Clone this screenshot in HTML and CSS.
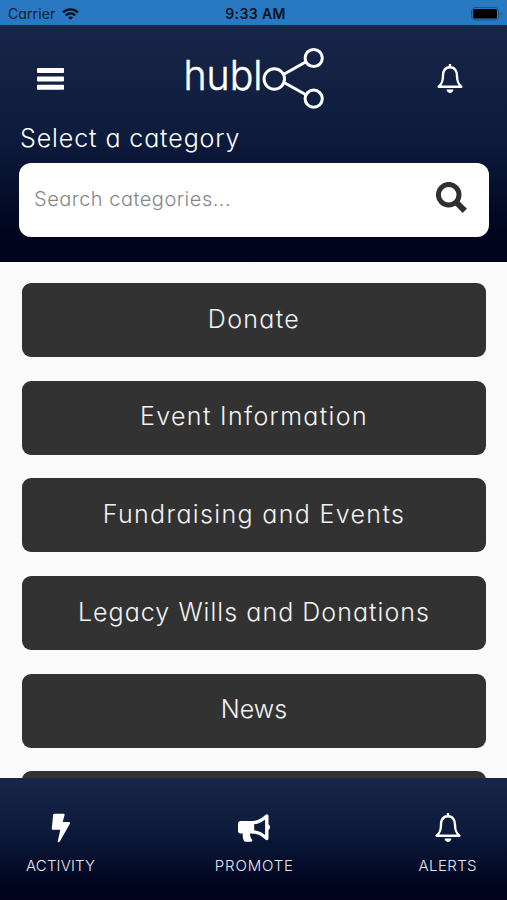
FILE: index.html
```html
<!DOCTYPE html>
<html lang="en">
<head>
    <meta charset="UTF-8">
    <meta name="viewport" content="width=device-width, initial-scale=1.0">
    <title>Hublo - Select a category</title>
    <link rel="stylesheet" href="styles.css">
</head>
<body>
    <div class="status-bar">
        <div class="carrier">
            <span>Carrier</span>
            <svg width="17" height="12" viewBox="0 0 17 12" fill="none" stroke="#07131f" stroke-width="2.3">
                <path d="M1 4.5C5.2.4 11.8.4 16 4.5M3.8 7.3c2.7-2.6 6.7-2.6 9.4 0"/>
                <path d="M8.5 11.8L6 9.4c1.4-1.3 3.6-1.3 5 0z" fill="#07131f" stroke="none"/>
            </svg>
        </div>
        <span class="time">9:33 AM</span>
        <svg class="battery" width="32" height="14" viewBox="0 0 32 14">
            <rect x=".5" y=".5" width="27" height="12.5" rx="3.5" fill="none" stroke="#1b568b"/>
            <rect x="2" y="2" width="24" height="9.5" rx="1.5" fill="#000"/>
            <path d="M29.5 4.8c1.8.6 1.8 3.4 0 4z" fill="#1b568b"/>
        </svg>
    </div>

    <header class="header">
        <div class="top-row">
            <button class="icon-btn" aria-label="Menu">
                <svg width="27" height="22" viewBox="0 0 27 22" fill="#fff">
                    <rect width="27" height="5" rx=".8"/>
                    <rect y="8.4" width="27" height="5" rx=".8"/>
                    <rect y="16.8" width="27" height="5" rx=".8"/>
                </svg>
            </button>
            <svg class="logo" width="142" height="64" viewBox="0 0 142 64">
                <text class="logo-text" x="0.5" y="43.5" textLength="79" lengthAdjust="spacingAndGlyphs">hubl</text>
                <g fill="none" stroke="#fff" stroke-width="3">
                    <circle cx="91.3" cy="33" r="10.2"/>
                    <circle cx="130.7" cy="12" r="8.6"/>
                    <circle cx="130.7" cy="52.7" r="8.6"/>
                    <path d="M100.5 28.5L123 15.8M100.5 36.2L123 48.8"/>
                </g>
            </svg>
            <button class="icon-btn" aria-label="Alerts">
                <svg width="26" height="30" viewBox="0 0 26 30">
                    <path d="M13 3.3C8 3.3 6 7.3 6 12c0 6.2-1.7 8.2-4.3 10.7h22.6C21.7 20.2 20 18.2 20 12c0-4.7-2-8.7-7-8.7zM13 .9v2" fill="none" stroke="#fff" stroke-width="2.4" stroke-linejoin="round" stroke-linecap="round"/>
                    <path d="M9.5 25.5h7c-.4 2.2-1.7 3.6-3.5 3.6s-3.1-1.4-3.5-3.6z" fill="#fff"/>
                </svg>
            </button>
        </div>
        <h1 class="title">Select a category</h1>
        <div class="search-box">
            <input type="text" class="search-input" placeholder="Search categories...">
            <svg width="32" height="32" viewBox="0 0 32 32" fill="none" stroke="#303030">
                <circle cx="12.7" cy="12.7" r="10.3" stroke-width="5"/>
                <path d="M20.5 20.5l8.3 8.3" stroke-width="6"/>
            </svg>
        </div>
    </header>

    <main class="categories">
        <button class="category">Donate</button>
        <button class="category">Event Information</button>
        <button class="category">Fundraising and Events</button>
        <button class="category legacy">Legacy Wills and Donations</button>
        <button class="category news">News</button>
        <button class="category" aria-label="More"></button>
    </main>

    <nav class="nav">
        <a class="nav-item">
            <svg width="20" height="30" viewBox="0 0 20 30" fill="#fff">
                <path d="M3.3.8h9.3c.8 0 1.2.6 1 1.3L11.7 9h6.2c1 0 1.5.9 1 1.7L8.8 28.6c-.8 1.2-2.3.7-2-.7l2.5-11.1H2c-.8 0-1.3-.6-1.2-1.3L2.1 1.9c.1-.7.5-1.1 1.2-1.1z"/>
            </svg>
            <span>ACTIVITY</span>
        </a>
        <a class="nav-item promote">
            <svg width="34" height="30" viewBox="0 0 34 30">
                <path d="M3.5 8H16v12.5h-3c0 2.6.6 4.2 2 6 .8 1.1.1 2.3-1.2 2.3H8.5c-.8 0-1.3-.4-1.6-1.1-1-2.2-1.5-4.7-1.1-7.2H3.5C2 20.5 1 19.5 1 18v-7.5C1 9 2 8 3.5 8z" fill="#fff"/>
                <path d="M15.5 9.7c5.5 0 10-2.7 14.3-6.7v22.5c-4.3-4-8.8-6.7-14.3-6.7z" fill="none" stroke="#fff" stroke-width="3.4" stroke-linejoin="round"/>
                <path d="M31 11.3c2.7.8 2.7 5.1 0 5.9z" fill="#fff"/>
            </svg>
            <span>PROMOTE</span>
        </a>
        <a class="nav-item alerts">
            <svg width="26" height="30" viewBox="0 0 26 30">
                <path d="M13 3.3C8 3.3 6 7.3 6 12c0 6.2-1.7 8.2-4.3 10.7h22.6C21.7 20.2 20 18.2 20 12c0-4.7-2-8.7-7-8.7zM13 .9v2" fill="none" stroke="#fff" stroke-width="2.4" stroke-linejoin="round" stroke-linecap="round"/>
                <path d="M9.5 25.5h7c-.4 2.2-1.7 3.6-3.5 3.6s-3.1-1.4-3.5-3.6z" fill="#fff"/>
            </svg>
            <span>ALERTS</span>
        </a>
    </nav>
</body>
</html>
```
FILE: styles.css
```css
* { box-sizing: border-box; }
body {
    margin: 0;
    height: 900px;
    display: flex;
    flex-direction: column;
    overflow: hidden;
    background: #fafafa;
    font-family: Inter, "Open Sans", sans-serif;
    font-weight: 300;
    font-feature-settings: "cv11";
}
button { border: 0; padding: 0; font: inherit; font-feature-settings: inherit; color: inherit; background: none; cursor: pointer; }
svg { display: block; flex: none; }

.status-bar {
    flex: none;
    height: 25px;
    display: grid;
    grid-template-columns: 1fr auto 1fr;
    align-items: center;
    padding: 2px 4px 0 8px;
    background: #2878c2;
    color: #0b1f33;
    font-size: 14px;
    font-weight: 400;
}
.carrier { display: flex; align-items: center; gap: 7px; letter-spacing: 0.1px; }
.time { font-weight: 600; font-size: 14px; letter-spacing: 0.4px; color: #07131f; }
.battery { justify-self: end; }

.header {
    flex: none;
    height: 237px;
    padding: 21px 18px 0 19px;
    background: linear-gradient(#182649, #0c1a3b 50%, #01051f 88%, #02021f);
    color: #fff;
}
.top-row { display: flex; align-items: center; justify-content: space-between; height: 64px; padding: 2px 26px 0 18px; }
.logo { margin: -2px 0 0 6px; overflow: visible; }
.logo-text { font-size: 41px; font-weight: 300; fill: #fff; stroke: #fff; stroke-width: 0.5px; }
.title { margin: 11px 0 0 1px; font-size: 25px; font-weight: 300; line-height: 34px; letter-spacing: 0.9px; }
.search-box {
    display: flex;
    align-items: center;
    height: 74px;
    margin-top: 8px;
    padding: 0 21px 4px 15px;
    border-radius: 12px;
    background: #fff;
}
.search-input {
    flex: 1;
    min-width: 0;
    padding: 2px 0 0;
    border: 0;
    outline: none;
    font: inherit;
    font-size: 20px;
    letter-spacing: 0.5px;
    font-feature-settings: inherit;
}
.search-input::placeholder { color: #85888b; }

.categories {
    flex: 1;
    min-height: 0;
    overflow: hidden;
    display: flex;
    flex-direction: column;
    gap: 23.7px;
    padding: 21px 21px 0 22px;
}
.category {
    flex: none;
    height: 74px;
    padding-bottom: 3px;
    border-radius: 9px;
    background: #323232;
    color: #f2f2f2;
    font-size: 25px;
    letter-spacing: 1.35px;
}
.legacy { letter-spacing: 1.05px; }
.news { letter-spacing: 0; }

.nav {
    flex: none;
    height: 122px;
    display: flex;
    justify-content: space-between;
    padding: 35px 30px 0 26px;
    background: linear-gradient(#182649, #0c1a3b 45%, #01051f 88%, #02021f);
    color: #e4e7f0;
}
.nav-item { display: flex; flex-direction: column; align-items: center; gap: 13px; font-size: 15px; line-height: 20px; letter-spacing: 0.15px; }
.promote { margin-right: 5px; letter-spacing: 0.85px; }
.alerts { letter-spacing: 0.4px; }
```
